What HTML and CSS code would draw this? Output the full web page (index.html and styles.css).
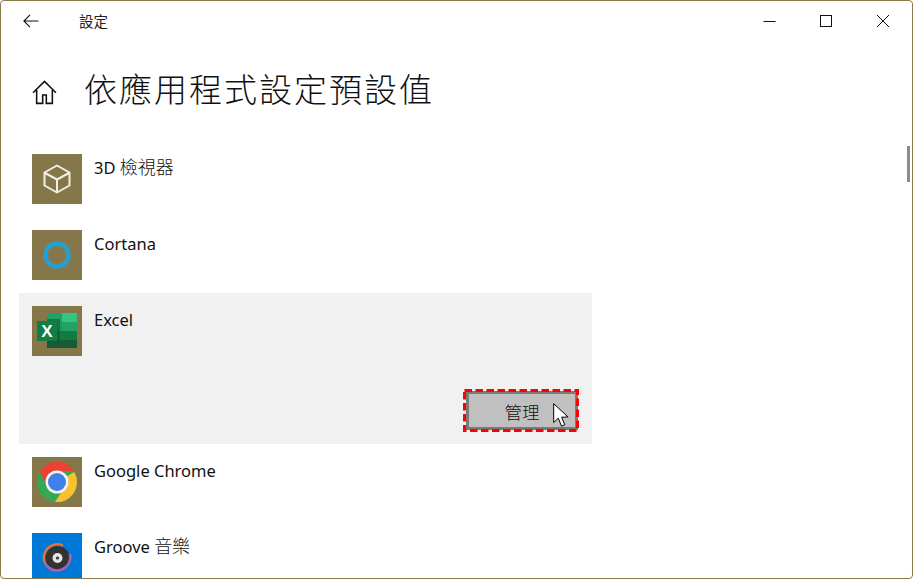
FILE: index.html
```html
<!DOCTYPE html>
<html lang="zh-Hant">
<head>
    <meta charset="UTF-8">
    <meta name="viewport" content="width=device-width, initial-scale=1.0">
    <title>設定</title>
    <link rel="stylesheet" href="styles.css">
</head>
<body>
    <div class="window">
        <!-- Title bar -->
        <div class="titlebar">
            <svg class="back-icon" width="16" height="14" viewBox="0 0 16 14"><path d="M15.500 7H1M7 .8.9 7 7 13.200" fill="none" stroke="#111" stroke-width="1.100"/></svg>
            <span class="titlebar-text">設定</span>
            <div class="window-controls">
                <svg class="control" width="14" height="14" viewBox="0 0 14 14"><path d="M1.500 7.500h12" stroke="#111" stroke-width="1"/></svg>
                <svg class="control" width="14" height="14" viewBox="0 0 14 14"><rect x="1.500" y="1.500" width="11" height="11" fill="none" stroke="#111" stroke-width="1"/></svg>
                <svg class="control" width="14" height="14" viewBox="0 0 14 14"><path d="M1 1l12 12M13 1 1 13" stroke="#111" stroke-width="1"/></svg>
            </div>
        </div>

        <!-- Page heading -->
        <div class="page-header">
            <svg class="home-icon" width="29" height="29" viewBox="0 0 24 24"><path d="M2.500 12.200 12 2.800l9.500 9.400M5.500 10v11h5v-7h3v7h5V10" fill="none" stroke="#111" stroke-width="1.300"/></svg>
            <h1>依應用程式設定預設值</h1>
        </div>

        <!-- App list -->
        <div class="app-list">
            <div class="app-row">
                <div class="app-main">
                    <svg class="app-icon" viewBox="0 0 50 50">
                        <rect width="50" height="50" fill="#86774a"/>
                        <path d="M25 11.500 37.500 18.500V31.500L25 38.500 12.500 31.500V18.500zM13 19 25 25.500 37 19M25 25.500V38" fill="none" stroke="#f1efe8" stroke-width="2" stroke-linejoin="round"/>
                    </svg>
                    <span class="app-name">3D <span class="cjk">檢視器</span></span>
                </div>
            </div>
            <div class="app-row">
                <div class="app-main">
                    <svg class="app-icon" viewBox="0 0 50 50">
                        <rect width="50" height="50" fill="#86774a"/>
                        <circle cx="25" cy="25" r="11.500" fill="none" stroke="#2aa5dc" stroke-width="5.500" opacity=".4"/>
                        <circle cx="25" cy="25" r="11.500" fill="none" stroke="#12a7e6" stroke-width="2.800"/>
                    </svg>
                    <span class="app-name">Cortana</span>
                </div>
            </div>
            <div class="app-row expanded">
                <div class="app-main">
                    <svg class="app-icon" viewBox="0 0 50 50">
                        <rect width="50" height="50" fill="#86774a"/>
                        <rect x="15" y="7" width="15" height="9" fill="#21a366"/>
                        <rect x="30" y="7" width="15" height="9" fill="#33c481"/>
                        <rect x="15" y="16" width="15" height="9" fill="#1c9a60"/>
                        <rect x="30" y="16" width="15" height="9" fill="#21a366"/>
                        <rect x="15" y="25" width="30" height="8.500" fill="#107c41"/>
                        <rect x="15" y="33.500" width="30" height="8.500" fill="#185c37"/>
                        <rect x="15" y="13" width="13" height="25" fill="#0c5a34" opacity=".6"/>
                        <rect x="5" y="15" width="20" height="20" fill="#117e43"/>
                        <text class="excel-x" x="15" y="31">X</text>
                    </svg>
                    <span class="app-name">Excel</span>
                </div>
                <div class="app-actions">
                    <div class="manage-button">
                        管理
                        <svg class="dash-marker" width="116" height="43" viewBox="0 0 116 43"><rect x="1.500" y="1.500" width="113" height="40" fill="none" stroke="#f00" stroke-width="3" stroke-dasharray="7.500 3.500"/></svg>
                        <svg class="cursor" width="16" height="25" viewBox="0 0 16 25"><path d="M.7.7V19.500l4.600-4.300 3.200 8 3.300-1.400-3.200-7.600 6.500-.2z" fill="#fff" stroke="#000" stroke-width="1"/></svg>
                    </div>
                </div>
            </div>
            <div class="app-row">
                <div class="app-main">
                    <svg class="app-icon" viewBox="0 0 50 50">
                        <rect width="50" height="50" fill="#86774a"/>
                        <circle cx="25" cy="25" r="20" fill="#34a853"/>
                        <path d="M25 14H42.300A20 20 0 0 0 7.700 15L15.500 30.500z" fill="#ea4335"/>
                        <path d="M34.500 19.500 42.300 15A20 20 0 0 1 23 45L31 33z" fill="#fbc02d"/>
                        <circle cx="25" cy="25" r="11.500" fill="#f3f3f3"/>
                        <circle cx="25" cy="25" r="9" fill="#3f7fe8"/>
                    </svg>
                    <span class="app-name">Google Chrome</span>
                </div>
            </div>
            <div class="app-row">
                <div class="app-main">
                    <svg class="app-icon" viewBox="0 0 50 50">
                        <rect width="50" height="50" fill="#0078d7"/>
                        <circle cx="25.500" cy="25" r="12" fill="#333"/>
                        <path d="M31 12.500A13.500 13.500 0 0 0 13.300 31" fill="none" stroke="#e0713a" stroke-width="2.500"/>
                        <path d="M13.300 31A13.500 13.500 0 0 0 38 21" fill="none" stroke="#a266b8" stroke-width="2.500"/>
                        <circle cx="25.500" cy="25" r="5" fill="#e4e4e4"/>
                        <circle cx="25.500" cy="25" r="1.600" fill="#333"/>
                    </svg>
                    <span class="app-name">Groove <span class="cjk">音樂</span></span>
                </div>
            </div>
        </div>

        <!-- Scrollbar thumb lies over the page -->
        <div class="scroll-thumb"></div>
    </div>
</body>
</html>
```

FILE: styles.css
```css
/* General styles for the body */
body {
    margin: 0;
    padding: 0;
    background: #fff;
    font-family: 'Noto Sans', 'Noto Sans CJK TC', sans-serif;
    color: #111;
}

/* Outer window frame */
.window {
    position: relative;
    box-sizing: border-box;
    width: 913px;
    height: 579px;
    border: 1px solid #8a7b4b;
    border-radius: 4px;
    overflow: hidden;
    background: #fff;
}

/* Title bar */
.titlebar {
    display: flex;
    align-items: center;
    height: 40px;
    padding-left: 22px;
}

.back-icon {
    margin-right: 40px;
}

.titlebar-text {
    margin-bottom: 2px;
    font-family: 'Noto Sans CJK TC', sans-serif;
    font-size: 14.5px;
    color: #222;
}

.window-controls {
    display: flex;
    align-items: center;
    gap: 43px;
    margin-left: auto;
    margin-right: 22px;
}

.control {
    display: block;
}

/* Page heading */
.page-header {
    display: flex;
    align-items: center;
    height: 100px;
    padding-left: 29px;
}

.home-icon {
    margin-right: 25px;
    margin-top: 2px;
}

.page-header h1 {
    margin: 0 0 6px;
    font-family: 'Noto Sans CJK TC', sans-serif;
    font-size: 33px;
    font-weight: 300;
    letter-spacing: 2px;
    color: #111;
}

/* App list */
.app-list {
    width: 573px;
    margin-left: 18px;
}

.app-row {
    padding: 13px;
}

.app-row.expanded {
    padding-bottom: 14px;
    background: #f1f1f1;
}

.app-main {
    display: flex;
    align-items: flex-start;
    gap: 12px;
}

.app-icon {
    display: block;
    width: 50px;
    height: 50px;
    flex-shrink: 0;
}

.app-name {
    font-size: 16.5px;
    line-height: 28px;
    color: #111;
}

.cjk {
    font-family: 'Noto Sans CJK TC', sans-serif;
    font-size: 18px;
    font-weight: 300;
    line-height: 1;
}

.excel-x {
    font-family: 'Liberation Sans', sans-serif;
    font-size: 17px;
    font-weight: 700;
    fill: #fff;
    text-anchor: middle;
}

/* Manage button with its red dashed marker */
.app-actions {
    display: flex;
    justify-content: flex-end;
    margin-top: 35px;
    margin-right: 1px;
}

.manage-button {
    position: relative;
    box-sizing: border-box;
    width: 112px;
    height: 39px;
    border: 3px solid #7a7a7a;
    background: #c0c0c0;
    font-family: 'Noto Sans CJK TC', sans-serif;
    font-size: 17.5px;
    font-weight: 300;
    line-height: 35px;
    text-align: center;
}

.dash-marker {
    position: absolute;
    left: -6px;
    top: -5px;
}

.cursor {
    position: absolute;
    left: 84px;
    top: 9px;
}

/* Scrollbar thumb */
.scroll-thumb {
    position: absolute;
    left: 906px;
    top: 145px;
    width: 3px;
    height: 36px;
    background: #8c8c8c;
}
```
